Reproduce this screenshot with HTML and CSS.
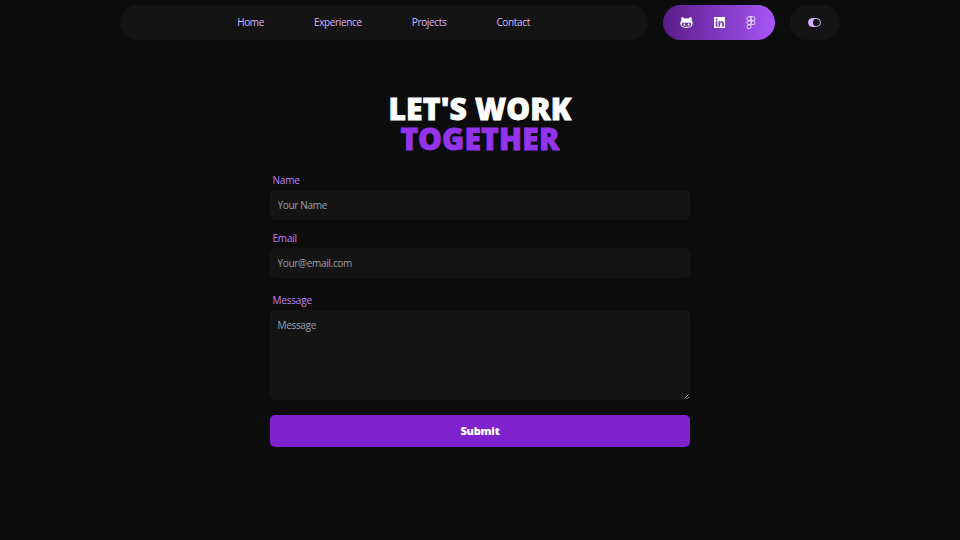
FILE: index.html
```
<!DOCTYPE html>
<html lang="en">
<head>
<meta charset="utf-8">
<title>Contact</title>
<link rel="stylesheet" href="styles.css">
</head>
<body>
<header class="topbar">
  <nav class="nav">
    <a>Home</a><a>Experience</a><a>Projects</a><a>Contact</a>
  </nav>
  <div class="social">
    <svg class="cat" viewBox="0 0 24 24"><path fill="currentColor" fill-rule="evenodd" d="M3 2c2 0 4 1 6 2.600a18 18 0 0 1 6 0C17 3 19 2 21 2c.9 2 .8 4.200.3 6C23 10 23.500 12 23.200 14.500 22.600 20 18.500 22 12 22S1.400 20 .8 14.500C.5 12 1 10 2.700 8 2.200 6.200 2.100 4 3 2ZM7 12c-2.500 0-3.700 1.500-3.700 3.600C3.300 19 7 20.200 12 20.200s8.700-1.200 8.700-4.600c0-2.100-1.200-3.600-3.700-3.600-2 0-3 .5-5 .5s-3-.5-5-.5Z"/><ellipse cx="8" cy="15.600" rx="1.700" ry="2.300" fill="currentColor"/><ellipse cx="16" cy="15.600" rx="1.700" ry="2.300" fill="currentColor"/><path d="M10.500 18q1.500 1 3 0" fill="none" stroke="currentColor"/></svg>
    <svg class="linkedin" viewBox="0 0 24 24"><path fill="currentColor" fill-rule="evenodd" d="M1.500 0h21A1.500 1.500 0 0 1 24 1.500v21a1.500 1.500 0 0 1-1.500 1.500h-21A1.500 1.500 0 0 1 0 22.500v-21A1.500 1.500 0 0 1 1.500 0ZM3.500 9v11.500h3.600V9ZM5.300 3.300a2.100 2.100 0 1 0 0 4.200 2.100 2.100 0 0 0 0-4.200ZM9.300 9v11.500h3.600v-5.700c0-1.500.4-2.900 2.100-2.900 1.800 0 1.900 1.700 1.900 3v5.600h3.600v-6.300c0-3.100-.7-5.500-4.300-5.500-1.700 0-2.900.9-3.400 1.900V9Z"/></svg>
    <svg class="figma" viewBox="0 0 20 28"><path fill="none" stroke="currentColor" stroke-width="1.900" d="M10 1.500H5.800a4.150 4.150 0 0 0 0 8.300H10Zm0 0h4.200a4.150 4.150 0 0 1 0 8.300H10Zm0 8.300H5.800a4.150 4.150 0 0 0 0 8.300H10Zm0 8.300H5.800a4.150 4.150 0 1 0 4.200 4.150Z"/><circle cx="14.200" cy="13.950" r="4.150" fill="none" stroke="currentColor" stroke-width="1.900"/></svg>
  </div>
  <div class="theme">
    <svg class="toggle" viewBox="0 0 26 18"><rect x="1" y="1" width="24" height="16" rx="8" fill="none" stroke="currentColor" stroke-width="2"/><path fill="currentColor" d="M9 1h9a8 8 0 0 0 0 16H9A8 8 0 0 1 9 1Z"/></svg>
  </div>
</header>
<main class="main">
  <h1 class="title"><span>LET'S WORK</span><span class="line-b">TOGETHER</span></h1>
  <form class="form">
    <label class="label" for="name">Name</label>
    <input class="field" id="name" type="text" placeholder="Your Name">
    <label class="label" for="email">Email</label>
    <input class="field email" id="email" type="email" placeholder="Your@email.com">
    <label class="label" for="message">Message</label>
    <div class="message-box">
      <textarea class="field message" id="message" placeholder="Message"></textarea>
      <svg class="grip" viewBox="0 0 5 5"><path d="M.5 4.500l4-4M3 4.800l1.800-1.800" fill="none" stroke="#bbb" stroke-width=".9"/></svg>
    </div>
    <button class="submit" type="button">Submit</button>
  </form>
</main>
</body>
</html>
```
FILE: styles.css
```
* { box-sizing: border-box; }
body {
  margin: 0;
  height: 540px;
  overflow: hidden;
  background: #0c0c0c;
  font-family: "Open Sans", "Noto Sans", sans-serif;
}
.topbar {
  display: flex;
  gap: 15px;
  width: 720px;
  margin: 0 0 0 120px;
  padding-top: 5px;
}
.nav, .social, .theme {
  display: flex;
  flex-shrink: 0;
  align-items: center;
  justify-content: center;
  height: 34.500px;
  border-radius: 18px;
  background: #141414;
}
.nav {
  width: 528px;
  padding: 1px 1px 0 0;
  gap: 50px;
  color: #d8b4fe;
  font-size: 10px;
  letter-spacing: -0.350px;
  line-height: 15px;
}
.social {
  width: 112.400px;
  padding-right: 2px;
  gap: 20.500px;
  color: #fff;
  background: linear-gradient(to right, #581c87, #a855f7);
}
.theme { width: 50px; padding-right: 1px; color: #d8b4fe; }
.cat { width: 13px; height: 13px; }
.linkedin { width: 11.500px; height: 11.500px; }
.figma { width: 10px; height: 13.500px; opacity: .85; }
.toggle { width: 13px; height: 9px; }
.main { width: 420px; margin: 54px auto 0; }
.title {
  display: flex;
  flex-direction: column;
  align-items: center;
  margin: 0 0 19px;
  font: 900 30px/30px "Noto Sans", sans-serif;
  letter-spacing: 0.200px;
  color: #fff;
  -webkit-text-stroke: 0.800px currentColor;
}
.line-b { color: #9333ea; }
.form { display: flex; flex-direction: column; }
.label {
  height: 15px;
  margin: 0 0 2px 2.500px;
  font-size: 10px;
  letter-spacing: -0.200px;
  line-height: 15px;
  color: #c084fc;
}
.field {
  display: block;
  width: 100%;
  height: 30px;
  margin: 0 0 11px;
  padding: 0 7.500px;
  border: 0;
  border-radius: 5px;
  background: #141414;
  color: #fff;
  font: 10px/15px "Open Sans", sans-serif;
  letter-spacing: -0.320px;
  outline: 0;
}
.field::placeholder { color: #9ca3af; opacity: 1; }
.email { margin-bottom: 15px; }
.message-box { position: relative; margin-bottom: 15px; }
.message { height: 90px; margin: 0; padding-top: 8px; resize: none; }
.grip { position: absolute; right: 1px; bottom: 1px; width: 5px; height: 5px; }
.submit {
  height: 32px;
  padding: 0;
  border: 0;
  border-radius: 5px;
  background: #7e22ce;
  color: #fff;
  font: 800 11px/32px "Open Sans", sans-serif;
  letter-spacing: -0.200px;
}
```
